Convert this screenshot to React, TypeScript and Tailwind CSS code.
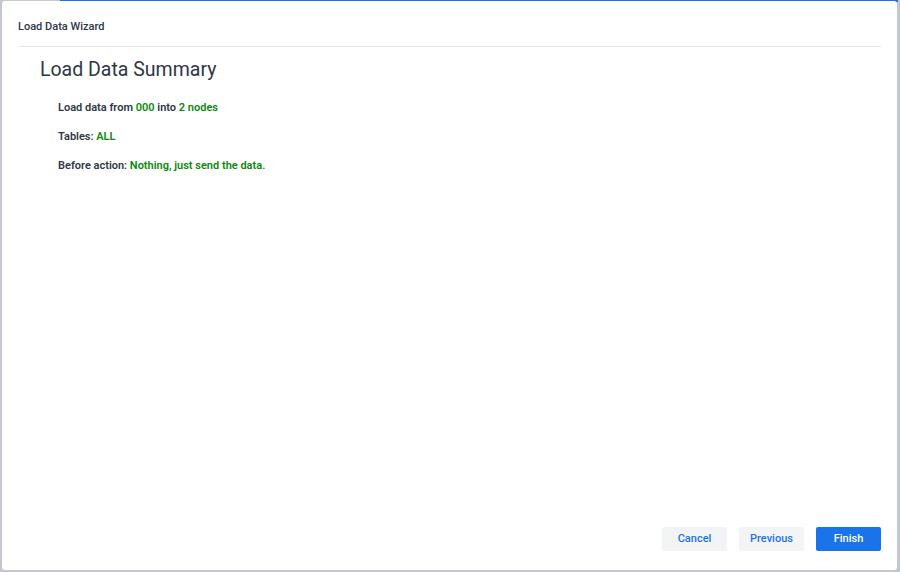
export default function App() {
  return (
    <div className="relative w-[900px] h-[572px] overflow-hidden bg-[#c3c8d0] font-['Roboto',sans-serif]">
      <div className="absolute top-0 left-[60px] right-[2px] h-[2px] bg-[#1a73e8]" />
      <div className="absolute left-[2px] top-[1px] w-[895px] h-[569px] bg-white rounded-[3px] flex flex-col">
        <div className="mx-[16px] h-[46px] pt-[19px] border-b border-[#e5e7eb] text-[11px] leading-[13px] font-medium text-[#2d3748]">
          Load Data Wizard
        </div>
        <div className="flex-1 px-[38px] pt-[11px]">
          <h1 className="text-[19.5px] leading-[24px] text-[#2d3748]">Load Data Summary</h1>
          <div className="pl-[18px] pt-[19px] flex flex-col gap-[16px] text-[11px] leading-[13px] font-semibold text-[#2d3748]">
            <p>
              Load data from <span className="text-[#0a8a0a]">000</span> into{" "}
              <span className="text-[#0a8a0a]">2 nodes</span>
            </p>
            <p>
              Tables: <span className="text-[#0a8a0a]">ALL</span>
            </p>
            <p>
              Before action: <span className="text-[#0a8a0a]">Nothing, just send the data.</span>
            </p>
          </div>
        </div>
        <div className="flex justify-end gap-[12px] pr-[16px] pb-[19px] text-[11px] font-medium">
          <button className="w-[65px] h-[24px] rounded-[2px] bg-[#f3f4f6] text-[#1a73e8]">Cancel</button>
          <button className="w-[65px] h-[24px] rounded-[2px] bg-[#f3f4f6] text-[#1a73e8]">Previous</button>
          <button className="w-[65px] h-[24px] rounded-[2px] bg-[#1a73e8] text-white">Finish</button>
        </div>
      </div>
    </div>
  );
}
